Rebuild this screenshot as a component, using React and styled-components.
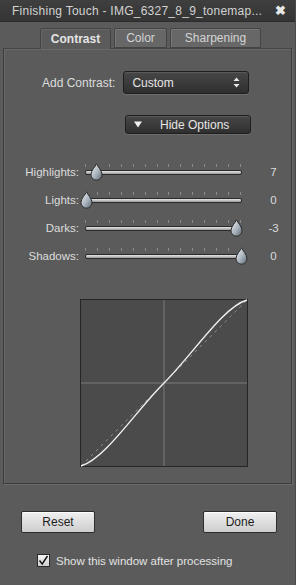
import React from "react";
import styled, { createGlobalStyle } from "styled-components";

const GlobalStyle = createGlobalStyle`
  html, body {
    margin: 0;
    padding: 0;
    background: #5b5b5b;
  }
  * { box-sizing: border-box; }
`;

const font = `"Liberation Sans", Arial, sans-serif`;

const Window = styled.div`
  width: 296px;
  height: 585px;
  background: #5b5b5b;
  border-right: 1px solid #4a4a4a;
  display: flex;
  flex-direction: column;
  font-family: ${font};
  font-size: 11px;
  color: #dcdcdc;
`;

const TitleBar = styled.div`
  height: 22px;
  flex: none;
  display: flex;
  align-items: center;
  justify-content: space-between;
  padding: 0 9px 0 12px;
  background: linear-gradient(#3f3f3f, #343434);
  border-bottom: 1px solid #2c2c2c;
  color: #d2d2d2;
  font-size: 12px;
  letter-spacing: 0.25px;
`;

const Close = styled.span`
  font-weight: bold;
  font-size: 13px;
  color: #e8e8e8;
`;

const TabRow = styled.div`
  display: flex;
  padding: 6px 0 0 40px;
  height: 27px;
  gap: 3px;
  margin-bottom: -1px;
  position: relative;
  z-index: 1;
`;

const Tab = styled.div`
  width: ${(p) => p.w}px;
  height: ${(p) => (p.active ? 21 : 20)}px;
  display: flex;
  align-items: center;
  justify-content: center;
  font-size: 12px;
  font-weight: ${(p) => (p.active ? "bold" : "normal")};
  color: ${(p) => (p.active ? "#e4e4e4" : "#d4d4d4")};
  background: ${(p) => (p.active ? "#5b5b5b" : "#676767")};
  border: 1px solid #444;
  border-bottom: ${(p) => (p.active ? "none" : "1px solid #444")};
  border-radius: 2px 2px 0 0;
  box-shadow: inset 1px 1px 0 ${(p) => (p.active ? "#666" : "#777")};
`;

const Panel = styled.div`
  margin: 0 3px;
  height: 436px;
  border: 1px solid #3c3c3c;
  border-top-color: #444;
  box-shadow: inset 1px 1px 0 #686868, 1px 1px 0 #6a6a6a;
  display: flex;
  flex-direction: column;
  padding-top: 22px;
`;

const ContrastRow = styled.div`
  display: flex;
  align-items: center;
  gap: 8px;
  width: 100%;
  padding-left: 38px;
`;

const Label = styled.span`
  font-size: 12px;
  color: #dcdcdc;
`;

const DarkBox = styled.div`
  width: 126px;
  height: ${(p) => p.h}px;
  display: flex;
  align-items: center;
  justify-content: ${(p) => p.justify || "space-between"};
  padding: 0 8px;
  border: 1px solid #1e1e1e;
  border-radius: 3px;
  background: linear-gradient(#474747, #2f2f2f);
  box-shadow: inset 0 1px 0 #5a5a5a, 0 1px 0 #6c6c6c;
  color: #e6e6e6;
  font-size: 12px;
`;

const OptionsRow = styled.div`
  display: flex;
  width: 100%;
  padding-left: 121px;
  margin-top: 21px;
`;

const Sliders = styled.div`
  width: 100%;
  margin-top: 29px;
  display: flex;
  flex-direction: column;
  gap: 10px;
`;

const SliderRow = styled.div`
  display: grid;
  grid-template-columns: 78px 160px 1fr;
  align-items: center;
  height: 18px;
`;

const SliderLabel = styled.span`
  text-align: right;
  padding-right: 3px;
  font-size: 11.5px;
  color: #dcdcdc;
`;

const Value = styled.span`
  text-align: center;
  padding-left: 14px;
  font-size: 11.5px;
  color: #dcdcdc;
`;

const TrackArea = styled.div`
  position: relative;
  height: 18px;
  margin-left: 3px;
`;

const Ticks = styled.div`
  position: absolute;
  left: 0;
  right: 1px;
  top: 1px;
  display: flex;
  justify-content: space-between;
`;

const Tick = styled.span`
  width: 1px;
  height: 3px;
  background: #8a8a8a;
`;

const Track = styled.div`
  position: absolute;
  left: 0;
  right: 0;
  top: 7px;
  height: 5px;
  border: 1px solid #2a2a2a;
  border-radius: 2px;
  background: linear-gradient(#e6e6e6, #9a9a9a);
`;

const Thumb = styled.svg`
  position: absolute;
  top: 0;
  width: 13px;
  height: 18px;
`;

const Graph = styled.svg`
  margin: 34px 0 0 76px;
  display: block;
`;

const Footer = styled.div`
  display: flex;
  flex-direction: column;
  padding: 27px 18px 0 21px;
`;

const Buttons = styled.div`
  display: flex;
  justify-content: space-between;
`;

const Button = styled.div`
  width: 74px;
  height: 22px;
  display: flex;
  align-items: center;
  justify-content: center;
  border: 1px solid #2e2e2e;
  border-radius: 2px;
  background: linear-gradient(#f0f0f0, #cdcdcd);
  box-shadow: inset 0 1px 0 #ffffff;
  color: #1c1c1c;
  font-size: 12px;
`;

const CheckRow = styled.label`
  display: flex;
  align-items: center;
  gap: 6px;
  margin: 21px 0 0 16px;
  font-size: 11.5px;
  color: #e2e2e2;
`;

const Box = styled.span`
  width: 13px;
  height: 13px;
  border: 1px solid #2a2a2a;
  background: linear-gradient(#f4f4f4, #d0d0d0);
  display: flex;
  align-items: center;
  justify-content: center;
`;

const Drop = ({ left }) => (
  <Thumb viewBox="0 0 13 18" style={{ left: left - 6 }}>
    <defs>
      <linearGradient id="dropg" x1="0" y1="0" x2="1" y2="1">
        <stop offset="0" stopColor="#f2f5f8" />
        <stop offset="0.55" stopColor="#a9b3bd" />
        <stop offset="1" stopColor="#5c6670" />
      </linearGradient>
    </defs>
    <path
      d="M6.5 0.8 C7.5 3.5 12 7.5 12 11.5 C12 14.8 9.5 17.2 6.5 17.2 C3.5 17.2 1 14.8 1 11.5 C1 7.5 5.5 3.5 6.5 0.8 Z"
      fill="url(#dropg)"
      stroke="#2b2b2b"
      strokeWidth="1"
    />
  </Thumb>
);

const sliders = [
  { label: "Highlights:", pos: 11, value: "7" },
  { label: "Lights:", pos: 1, value: "0" },
  { label: "Darks:", pos: 151, value: "-3" },
  { label: "Shadows:", pos: 156, value: "0" },
];

const App = () => {
  const ticks = Array.from({ length: 14 });
  return (
    <>
      <GlobalStyle />
      <Window>
        <TitleBar>
          <span>Finishing Touch - IMG_6327_8_9_tonemap...</span>
          <Close>✖</Close>
        </TitleBar>
        <TabRow>
          <Tab active w={71}>Contrast</Tab>
          <Tab w={53}>Color</Tab>
          <Tab w={91}>Sharpening</Tab>
        </TabRow>
        <Panel>
          <ContrastRow>
            <Label>Add Contrast:</Label>
            <DarkBox h={23}>
              <span>Custom</span>
              <svg width="7" height="11" viewBox="0 0 7 11">
                <path d="M3.5 0.5 L6.5 4 L0.5 4 Z M0.5 7 L6.5 7 L3.5 10.5 Z" fill="#e8e8e8" />
              </svg>
            </DarkBox>
          </ContrastRow>
          <OptionsRow>
            <DarkBox h={19} justify="flex-start">
              <svg width="8" height="7" viewBox="0 0 8 7">
                <path d="M0 0.5 L8 0.5 L4 6.5 Z" fill="#f0f0f0" />
              </svg>
              <span style={{ marginLeft: 18 }}>Hide Options</span>
            </DarkBox>
          </OptionsRow>
          <Sliders>
            {sliders.map((s) => (
              <SliderRow key={s.label}>
                <SliderLabel>{s.label}</SliderLabel>
                <TrackArea>
                  <Ticks>
                    {ticks.map((_, i) => (
                      <Tick key={i} />
                    ))}
                  </Ticks>
                  <Track />
                  <Drop left={s.pos} />
                </TrackArea>
                <Value>{s.value}</Value>
              </SliderRow>
            ))}
          </Sliders>
          <Graph width="168" height="168" viewBox="0 0 168 168">
            <rect x="0.5" y="0.5" width="167" height="167" fill="#4b4b4b" stroke="#262626" />
            <line x1="84" y1="1" x2="84" y2="167" stroke="#7a7a7a" strokeWidth="1" />
            <line x1="1" y1="84" x2="167" y2="84" stroke="#7a7a7a" strokeWidth="1" />
            <line x1="1" y1="167" x2="167" y2="1" stroke="#8c8c8c" strokeWidth="1" strokeDasharray="3 4" />
            <path
              d="M1 167 C25 160 55 113 84 84 C113 55 143 8 167 1"
              fill="none"
              stroke="#f0f0f0"
              strokeWidth="1.4"
            />
          </Graph>
        </Panel>
        <Footer>
          <Buttons>
            <Button>Reset</Button>
            <Button>Done</Button>
          </Buttons>
          <CheckRow>
            <Box>
              <svg width="11" height="11" viewBox="0 0 11 11">
                <path d="M1.5 5.5 L4.2 9 L9.5 1" fill="none" stroke="#111" strokeWidth="1.4" />
              </svg>
            </Box>
            Show this window after processing
          </CheckRow>
        </Footer>
      </Window>
    </>
  );
};

export default App;
